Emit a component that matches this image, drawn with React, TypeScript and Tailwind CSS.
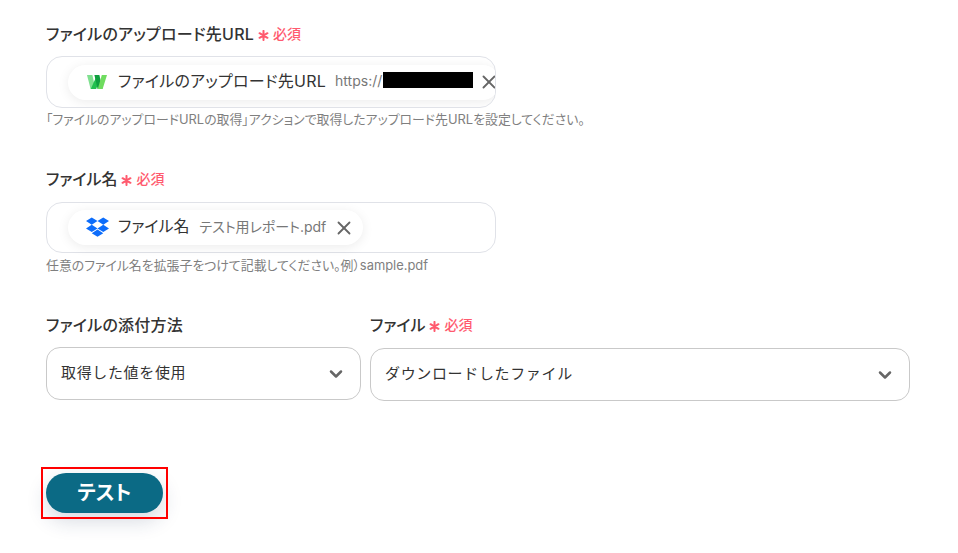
import { X, ChevronDown } from "lucide-react";

function Required() {
  return (
    <span className="flex items-center gap-[4px] pb-[2px] text-[#ff5a6e]">
      <svg width="11" height="11" viewBox="0 0 12 12" className="mt-[4px]" stroke="currentColor" strokeWidth="2.2" strokeLinecap="round">
        <path d="M6 1v10M1.7 3.5l8.6 5M10.3 3.5l-8.6 5" />
      </svg>
      <span className="text-[14px] font-medium tracking-normal">必須</span>
    </span>
  );
}

function WorkLogo() {
  return (
    <svg width="20" height="16" viewBox="0 0 20 16">
      <path d="M0 1h5.4l3 14H3.6z" fill="#7fe08f" />
      <path d="M3.8 15h5.4L12.4 6 10 1z" fill="#22c04f" />
      <path d="M7.4 1h5l3 14h-4.8z" fill="#0f9f3f" />
      <path d="M10.8 15h4.8L20 1h-5.2z" fill="#6fdc5f" />
    </svg>
  );
}

function DropboxLogo() {
  return (
    <svg width="23" height="22" viewBox="0 0 24 22" fill="#0d6dfb">
      <path d="M6 0l6 3.8-6 3.8-6-3.8zM18 0l6 3.8-6 3.8-6-3.8zM0 11.4l6-3.8 6 3.8-6 3.8zM18 7.6l6 3.8-6 3.8-6-3.8zM6 16.4l6-3.8 6 3.8-6 3.8z" />
    </svg>
  );
}

function Select({ value, className }: { value: string; className: string }) {
  return (
    <div className={`flex h-[53px] items-center justify-between rounded-[14px] border border-[#c9c9c9] pl-[14px] pr-[14px] text-[15px] tracking-[0.65px] text-[#333] [font-feature-settings:normal] ${className}`}>
      <span>{value}</span>
      <ChevronDown className="h-[20px] w-[20px] text-[#666]" strokeWidth={3} />
    </div>
  );
}

export default function App() {
  return (
    <div className="flex min-h-[553px] flex-col bg-white pl-[46px] pt-[24px] font-['Inter','Noto_Sans_CJK_JP',sans-serif] text-[#333] [font-feature-settings:'palt']">
      <div className="flex h-[20px] items-center gap-[4px] text-[16px] font-medium tracking-[0.25px]">
        <span>ファイルのアップロード先URL</span>
        <Required />
      </div>
      <div className="mt-[12px] flex h-[52px] w-[450px] items-center overflow-hidden rounded-[16px] border border-[#e0e2e8] pl-[21px]">
        <div className="flex h-[35px] shrink-0 items-center rounded-full bg-white pl-[19px] shadow-[0_2px_12px_rgba(0,0,0,0.08)]">
          <WorkLogo />
          <span className="ml-[11px] pb-[3px] text-[16px] tracking-[0.25px]">ファイルのアップロード先URL</span>
          <span className="relative ml-[9px] w-[138px] pb-[3px] text-[14px] text-[#777]">
            https://
            <span className="absolute left-[48px] top-[2px] h-[16px] w-[90px] bg-black" />
          </span>
          <X className="ml-[5px] h-[22px] w-[22px] text-[#666]" strokeWidth={2} />
        </div>
      </div>
      <p className="mt-[3px] text-[12.9px] leading-[18px] text-[#7f7f7f]">
        「ファイルのアップロードURLの取得」アクションで取得したアップロード先URLを設定してください。
      </p>

      <div className="mt-[40px] flex h-[20px] items-center gap-[4px] text-[16px] font-medium">
        <span>ファイル名</span>
        <Required />
      </div>
      <div className="mt-[13px] flex h-[51px] w-[450px] items-center rounded-[16px] border border-[#e0e2e8] pl-[21px]">
        <div className="flex h-[35px] items-center rounded-full bg-white pl-[18px] pr-[8px] shadow-[0_2px_12px_rgba(0,0,0,0.08)]">
          <DropboxLogo />
          <span className="ml-[9px] pb-[3px] text-[16px]">ファイル名</span>
          <span className="ml-[10px] pb-[3px] text-[14px] text-[#777]">テスト用レポート.pdf</span>
          <X className="ml-[7px] h-[22px] w-[22px] text-[#666]" strokeWidth={2} />
        </div>
      </div>
      <p className="mt-[4px] text-[12.9px] leading-[18px] text-[#7f7f7f]">
        任意のファイル名を拡張子をつけて記載してください。例）sample.pdf
      </p>

      <div className="mt-[40px] flex items-end gap-[9px]">
        <div className="flex w-[315px] flex-col gap-[12px]">
          <div className="flex h-[20px] items-center text-[16px] font-medium tracking-[0.25px]">ファイルの添付方法</div>
          <Select value="取得した値を使用" className="w-full" />
        </div>
        <div className="flex w-[540px] flex-col gap-[12px]">
          <div className="flex h-[20px] items-center gap-[4px] text-[16px] font-medium">
            <span>ファイル</span>
            <Required />
          </div>
          <Select value="ダウンロードしたファイル" className="w-full translate-y-[1px]" />
        </div>
      </div>

      <div className="mt-[72px] w-fit py-[1px] outline-2 outline-[#f00] outline-offset-[3px]">
        <button className="block h-[40px] w-[117px] rounded-full bg-[#0b6a85] text-[20px] font-bold text-white shadow-[0_8px_20px_rgba(30,50,90,0.18)]">
          テスト
        </button>
      </div>
    </div>
  );
}
